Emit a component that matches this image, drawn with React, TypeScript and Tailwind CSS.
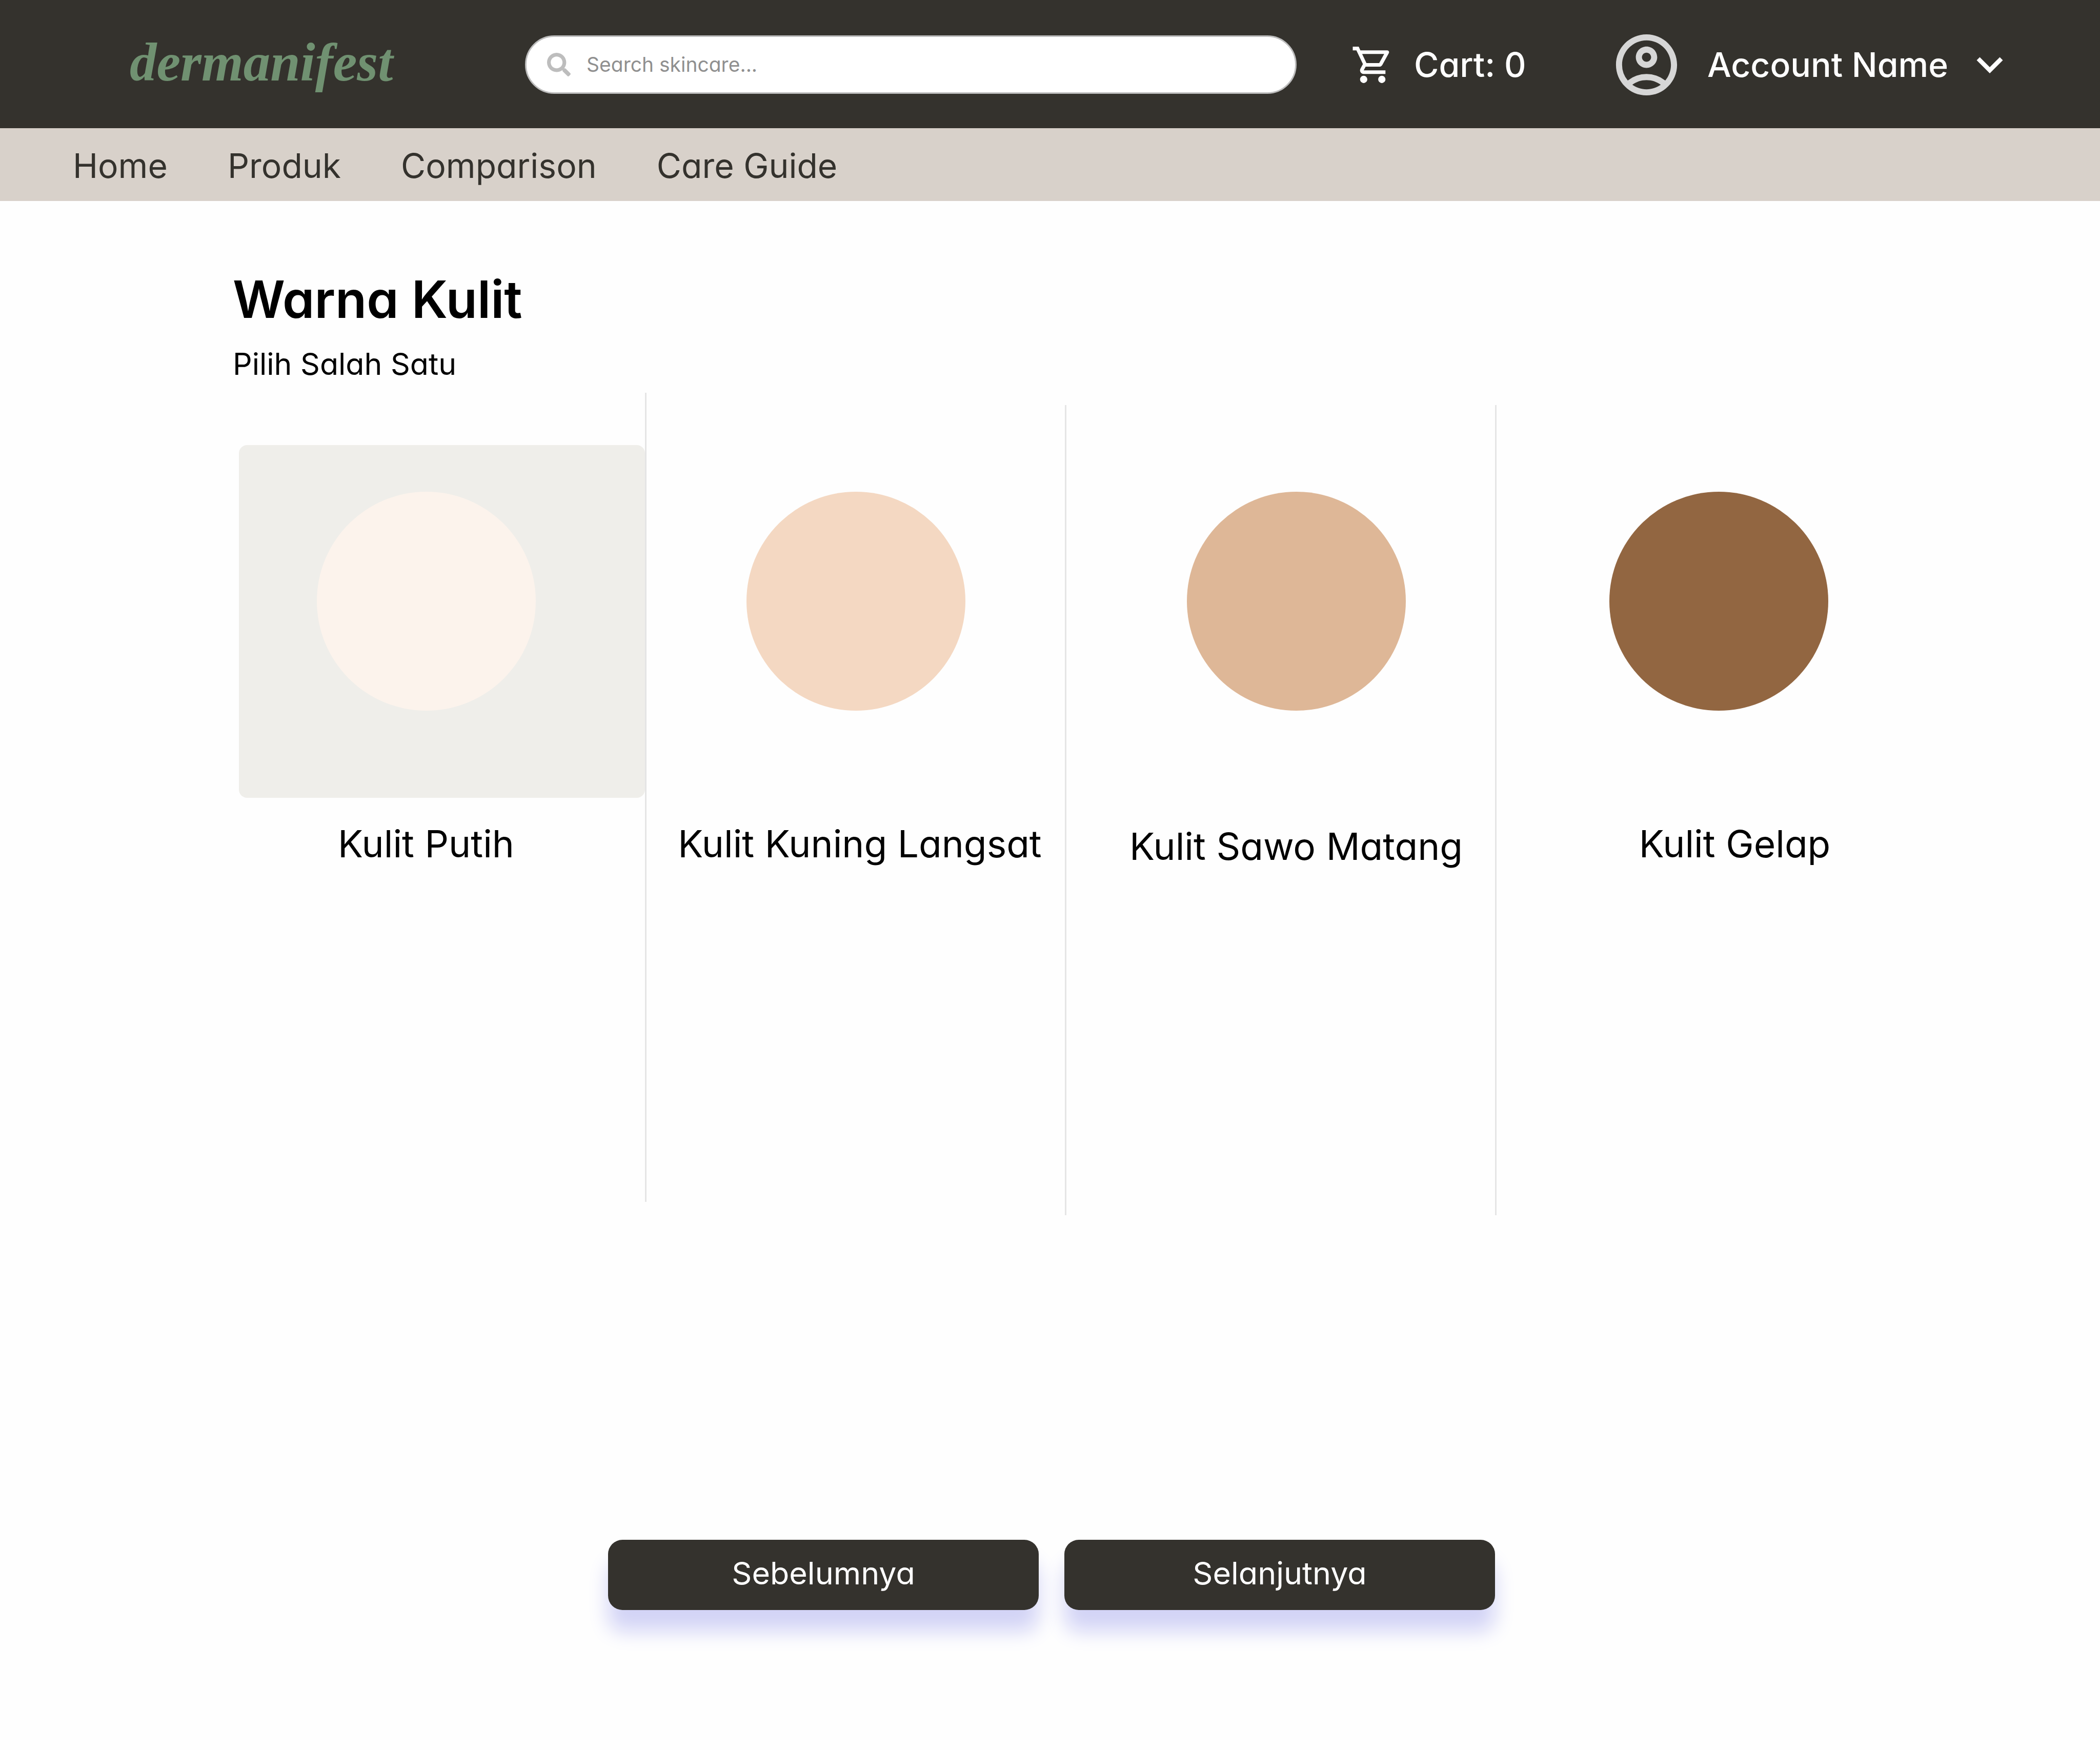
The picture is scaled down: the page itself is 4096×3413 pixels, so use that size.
import { useState } from "react";
import { FaSearch } from "react-icons/fa";
import {
  MdKeyboardArrowDown,
  MdOutlineAccountCircle,
  MdOutlineShoppingCart,
} from "react-icons/md";

const navLinks = ["Home", "Produk", "Comparison", "Care Guide"];

const skinTones = [
  {
    id: "putih",
    name: "Kulit Putih",
    dot: "bg-[#fcf3ec]",
    column: "h-[1578px] border-r-[3px] pt-[102px]",
    panel: "pr-[62px]",
    caption: "mt-[46px] pr-[62px]",
  },
  {
    id: "kuning-langsat",
    name: "Kulit Kuning Langsat",
    dot: "bg-[#f4d8c2]",
    column: "mt-6 h-[1580px] border-r-[3px] pt-[78px]",
    panel: "",
    caption: "mt-[46px] pl-[16px]",
  },
  {
    id: "sawo-matang",
    name: "Kulit Sawo Matang",
    dot: "bg-[#deb797]",
    column: "mt-6 h-[1580px] border-r-[3px] pt-[78px]",
    panel: "pl-[60px]",
    caption: "mt-[51px] pl-[60px]",
  },
  {
    id: "gelap",
    name: "Kulit Gelap",
    dot: "bg-[#926641]",
    column: "mt-6 h-[1580px] pt-[78px]",
    panel: "",
    caption: "mt-[46px] pl-[62px]",
  },
];

function Header() {
  return (
    <header className="flex h-[250px] items-center bg-[#34322d] pt-0.5 text-[66px] font-medium text-white">
      <div className="w-1/4 pl-[253px]">
        <a
          href="#"
          className="font-['Liberation_Serif',serif] text-[105px] leading-none font-bold text-[#709171] italic"
        >
          dermanifest
        </a>
      </div>
      <label className="flex h-[114px] flex-1 items-center gap-[31px] rounded-full border-[3px] border-[#bdbdbd] bg-white pl-[40px]">
        <FaSearch className="size-[46px] text-[#bdbdbd]" aria-hidden />
        <input
          type="search"
          aria-label="Search skincare"
          placeholder="Search skincare..."
          className="flex-1 bg-transparent text-[39px] font-normal text-[#34322d] outline-none placeholder:text-[#8f8f8f]"
        />
      </label>
      <div className="w-[611px] pl-[106px]">
        <button type="button" className="flex items-center gap-[38px]">
          <MdOutlineShoppingCart className="size-[85px]" aria-hidden />
          Cart: 0
        </button>
      </div>
      <div className="w-[956px]">
        <button type="button" className="flex items-center">
          <MdOutlineAccountCircle className="size-[143px] text-[#d6d6d6]" aria-hidden />
          <span className="ml-[47px]">Account Name</span>
          <MdKeyboardArrowDown className="ml-[30px] size-[102px]" aria-hidden />
        </button>
      </div>
    </header>
  );
}

function Nav() {
  return (
    <nav className="flex h-[142px] items-center gap-[117px] bg-[#d8d1ca] pt-1 pl-[142px] text-[66px] text-[#34322d]">
      {navLinks.map((label) => (
        <a key={label} href="#">
          {label}
        </a>
      ))}
    </nav>
  );
}

function StepButton({ children }: { children: string }) {
  return (
    <button
      type="button"
      className="h-[137px] w-[840px] rounded-[28px] bg-[#34322d] pb-1.5 shadow-[0_42px_38px_#d3d4f6]"
    >
      {children}
    </button>
  );
}

export default function App() {
  const [selected, setSelected] = useState("putih");

  return (
    <div className="flex min-h-screen flex-col bg-[#fefefe] font-['Inter',sans-serif] [font-feature-settings:'cv11']">
      <Header />
      <Nav />
      <main className="flex-1 pt-[132px] text-black">
        <h1 className="pl-[454px] text-[100px] leading-[120px] font-semibold">Warna Kulit</h1>
        <p className="mt-[26px] pl-[454px] text-[59px] leading-[80px]">Pilih Salah Satu</p>

        <div
          role="radiogroup"
          aria-label="Warna Kulit"
          className="mt-4 grid grid-cols-[795fr_819fr_839fr_867fr] items-start pr-[310px] pl-[466px]"
        >
          {skinTones.map((tone) => (
            <div key={tone.id} className={`border-[#e5e5e5] ${tone.column}`}>
              <label className="block cursor-pointer">
                <input
                  type="radio"
                  name="skin-tone"
                  value={tone.id}
                  checked={selected === tone.id}
                  onChange={() => setSelected(tone.id)}
                  className="peer sr-only"
                />
                <span
                  className={`flex h-[688px] justify-center rounded-2xl pt-[91px] peer-checked:bg-[#efeeea] ${tone.panel}`}
                >
                  <span className={`size-[427px] rounded-full ${tone.dot}`} />
                </span>
                <span
                  className={`block text-center text-[73px] leading-[88px] whitespace-nowrap ${tone.caption}`}
                >
                  {tone.name}
                </span>
              </label>
            </div>
          ))}
        </div>

        <div className="mt-[633px] flex justify-center gap-[50px] pl-[6px] text-[61px] text-white">
          <StepButton>Sebelumnya</StepButton>
          <StepButton>Selanjutnya</StepButton>
        </div>
      </main>
    </div>
  );
}
